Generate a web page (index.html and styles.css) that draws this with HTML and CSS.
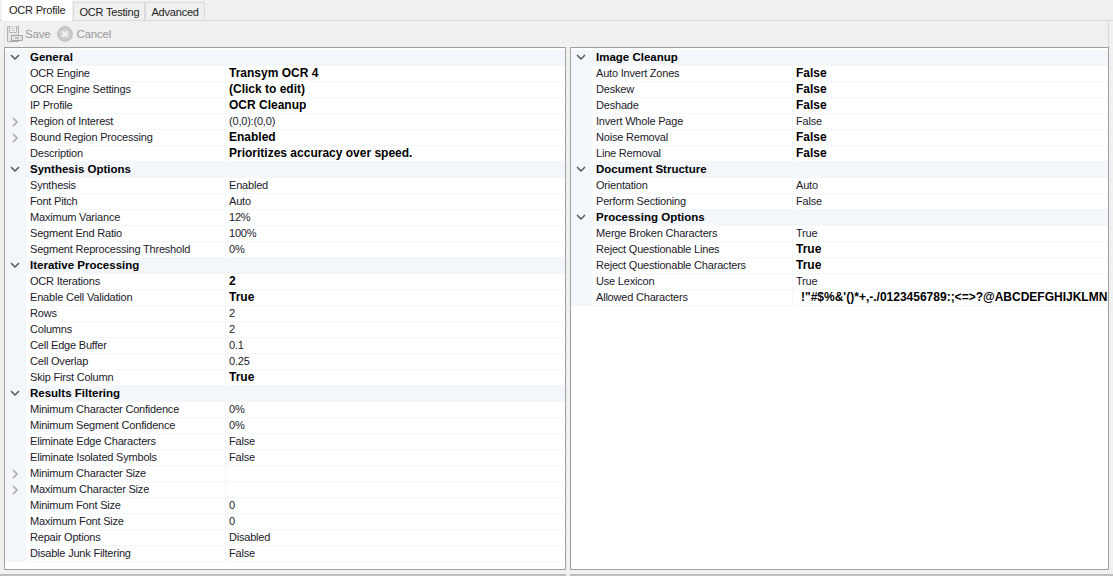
FILE: index.html
```html
<!DOCTYPE html>
<html lang="en">
<head>
<meta charset="utf-8">
<title>OCR Profile</title>
<link rel="stylesheet" href="styles.css">
</head>
<body>
<div class="tabs">
  <div class="tab active">OCR Profile</div>
  <div class="tab">OCR Testing</div>
  <div class="tab">Advanced</div>
</div>
<div class="toolbar">
  <svg class="icon" width="18" height="18" viewBox="0 0 18 18"><path d="M1.500 1.500h11v15h-11z" fill="#e6e6e6" stroke="#b0b0b0"/><path d="M3.500 1.500v6h7v-6" fill="#f4f4f4" stroke="#b8b8b8"/><path d="M5 3.500h4M5 5.500h4" stroke="#c8c8c8"/><path d="M5.500 10.500h11v5h-11z" fill="#e4e4e4" stroke="#a4a4a4"/><path d="M9 13h4" stroke="#a0a0a0"/></svg>
  <span class="tool-label">Save</span>
  <svg class="icon icon-cancel" width="16" height="16" viewBox="0 0 16 16"><circle cx="8" cy="8" r="7.500" fill="#c4c4c4" stroke="#c8c8c8"/><circle cx="8" cy="8" r="5.500" fill="#d2d2d2"/><path d="M5.500 5.500l5 5M10.500 5.500l-5 5" stroke="#f2f2f2" stroke-width="2"/></svg>
  <span class="tool-label tool-label-cancel">Cancel</span>
</div>
<div class="panels">
  <section class="grid grid-left">
    <div class="row group"><span class="gut"><svg class="chev" width="10" height="7" viewBox="0 0 10 7"><path d="M1 1l4 4 4-4" fill="none" stroke="#555" stroke-width="1.500"/></svg></span><span class="name">General</span></div>
    <div class="row"><span class="gut"></span><span class="name">OCR Engine</span><span class="val b">Transym OCR 4</span></div>
    <div class="row"><span class="gut"></span><span class="name">OCR Engine Settings</span><span class="val b">(Click to edit)</span></div>
    <div class="row"><span class="gut"></span><span class="name">IP Profile</span><span class="val b">OCR Cleanup</span></div>
    <div class="row"><span class="gut"><svg class="exp" width="7" height="10" viewBox="0 0 7 10"><path d="M1 1l4 4-4 4" fill="none" stroke="#a6a6a6" stroke-width="1.500"/></svg></span><span class="name">Region of Interest</span><span class="val">(0,0):(0,0)</span></div>
    <div class="row"><span class="gut"><svg class="exp" width="7" height="10" viewBox="0 0 7 10"><path d="M1 1l4 4-4 4" fill="none" stroke="#a6a6a6" stroke-width="1.500"/></svg></span><span class="name">Bound Region Processing</span><span class="val b">Enabled</span></div>
    <div class="row"><span class="gut"></span><span class="name">Description</span><span class="val b">Prioritizes accuracy over speed.</span></div>
    <div class="row group"><span class="gut"><svg class="chev" width="10" height="7" viewBox="0 0 10 7"><path d="M1 1l4 4 4-4" fill="none" stroke="#555" stroke-width="1.500"/></svg></span><span class="name">Synthesis Options</span></div>
    <div class="row"><span class="gut"></span><span class="name">Synthesis</span><span class="val">Enabled</span></div>
    <div class="row"><span class="gut"></span><span class="name">Font Pitch</span><span class="val">Auto</span></div>
    <div class="row"><span class="gut"></span><span class="name">Maximum Variance</span><span class="val">12%</span></div>
    <div class="row"><span class="gut"></span><span class="name">Segment End Ratio</span><span class="val">100%</span></div>
    <div class="row"><span class="gut"></span><span class="name">Segment Reprocessing Threshold</span><span class="val">0%</span></div>
    <div class="row group"><span class="gut"><svg class="chev" width="10" height="7" viewBox="0 0 10 7"><path d="M1 1l4 4 4-4" fill="none" stroke="#555" stroke-width="1.500"/></svg></span><span class="name">Iterative Processing</span></div>
    <div class="row"><span class="gut"></span><span class="name">OCR Iterations</span><span class="val b">2</span></div>
    <div class="row"><span class="gut"></span><span class="name">Enable Cell Validation</span><span class="val b">True</span></div>
    <div class="row"><span class="gut"></span><span class="name">Rows</span><span class="val">2</span></div>
    <div class="row"><span class="gut"></span><span class="name">Columns</span><span class="val">2</span></div>
    <div class="row"><span class="gut"></span><span class="name">Cell Edge Buffer</span><span class="val">0.1</span></div>
    <div class="row"><span class="gut"></span><span class="name">Cell Overlap</span><span class="val">0.25</span></div>
    <div class="row"><span class="gut"></span><span class="name">Skip First Column</span><span class="val b">True</span></div>
    <div class="row group"><span class="gut"><svg class="chev" width="10" height="7" viewBox="0 0 10 7"><path d="M1 1l4 4 4-4" fill="none" stroke="#555" stroke-width="1.500"/></svg></span><span class="name">Results Filtering</span></div>
    <div class="row"><span class="gut"></span><span class="name">Minimum Character Confidence</span><span class="val">0%</span></div>
    <div class="row"><span class="gut"></span><span class="name">Minimum Segment Confidence</span><span class="val">0%</span></div>
    <div class="row"><span class="gut"></span><span class="name">Eliminate Edge Characters</span><span class="val">False</span></div>
    <div class="row"><span class="gut"></span><span class="name">Eliminate Isolated Symbols</span><span class="val">False</span></div>
    <div class="row"><span class="gut"><svg class="exp" width="7" height="10" viewBox="0 0 7 10"><path d="M1 1l4 4-4 4" fill="none" stroke="#a6a6a6" stroke-width="1.500"/></svg></span><span class="name">Minimum Character Size</span><span class="val"></span></div>
    <div class="row"><span class="gut"><svg class="exp" width="7" height="10" viewBox="0 0 7 10"><path d="M1 1l4 4-4 4" fill="none" stroke="#a6a6a6" stroke-width="1.500"/></svg></span><span class="name">Maximum Character Size</span><span class="val"></span></div>
    <div class="row"><span class="gut"></span><span class="name">Minimum Font Size</span><span class="val">0</span></div>
    <div class="row"><span class="gut"></span><span class="name">Maximum Font Size</span><span class="val">0</span></div>
    <div class="row"><span class="gut"></span><span class="name">Repair Options</span><span class="val">Disabled</span></div>
    <div class="row"><span class="gut"></span><span class="name">Disable Junk Filtering</span><span class="val">False</span></div>
  </section>
  <section class="grid grid-right">
    <div class="row group"><span class="gut"><svg class="chev" width="10" height="7" viewBox="0 0 10 7"><path d="M1 1l4 4 4-4" fill="none" stroke="#555" stroke-width="1.500"/></svg></span><span class="name">Image Cleanup</span></div>
    <div class="row"><span class="gut"></span><span class="name">Auto Invert Zones</span><span class="val b">False</span></div>
    <div class="row"><span class="gut"></span><span class="name">Deskew</span><span class="val b">False</span></div>
    <div class="row"><span class="gut"></span><span class="name">Deshade</span><span class="val b">False</span></div>
    <div class="row"><span class="gut"></span><span class="name">Invert Whole Page</span><span class="val">False</span></div>
    <div class="row"><span class="gut"></span><span class="name">Noise Removal</span><span class="val b">False</span></div>
    <div class="row"><span class="gut"></span><span class="name">Line Removal</span><span class="val b">False</span></div>
    <div class="row group"><span class="gut"><svg class="chev" width="10" height="7" viewBox="0 0 10 7"><path d="M1 1l4 4 4-4" fill="none" stroke="#555" stroke-width="1.500"/></svg></span><span class="name">Document Structure</span></div>
    <div class="row"><span class="gut"></span><span class="name">Orientation</span><span class="val">Auto</span></div>
    <div class="row"><span class="gut"></span><span class="name">Perform Sectioning</span><span class="val">False</span></div>
    <div class="row group"><span class="gut"><svg class="chev" width="10" height="7" viewBox="0 0 10 7"><path d="M1 1l4 4 4-4" fill="none" stroke="#555" stroke-width="1.500"/></svg></span><span class="name">Processing Options</span></div>
    <div class="row"><span class="gut"></span><span class="name">Merge Broken Characters</span><span class="val">True</span></div>
    <div class="row"><span class="gut"></span><span class="name">Reject Questionable Lines</span><span class="val b">True</span></div>
    <div class="row"><span class="gut"></span><span class="name">Reject Questionable Characters</span><span class="val b">True</span></div>
    <div class="row"><span class="gut"></span><span class="name">Use Lexicon</span><span class="val">True</span></div>
    <div class="row"><span class="gut"></span><span class="name">Allowed Characters</span><span class="val b allowed">!"#$%&amp;'()*+,-./0123456789:;&lt;=&gt;?@ABCDEFGHIJKLMN</span></div>
  </section>
</div>
<div class="footer-line"><div class="fl-left"></div><div class="fl-right"></div></div>
```

FILE: styles.css
```css
* { box-sizing: border-box; }
html, body { margin: 0; height: 100%; }
body {
  width: 1113px;
  height: 576px;
  overflow: hidden;
  background: #f0f0f0;
  font-family: "Liberation Sans", Arial, sans-serif;
  font-size: 11px;
  color: #1a1a2a;
  display: flex;
  flex-direction: column;
}
.tabs {
  display: flex;
  align-items: flex-end;
  height: 21px;
  padding-left: 2px;
  border-bottom: 1px solid #d9d9d9;
}
.tab {
  height: 18px;
  padding: 0 5px;
  background: #f0f0f0;
  border: 1px solid #d9d9d9;
  border-bottom: 0;
  line-height: 18px;
  color: #222;
  font-size: 11px;
  letter-spacing: -0.2px;
}
.tab.active {
  height: 21px;
  padding: 0 6px;
  margin-right: 1px;
  background: #fff;
  border-color: #fff;
  line-height: 19px;
  margin-bottom: -1px;
  position: relative;
}
.toolbar {
  height: 26px;
  margin: 0 4px 0 4px;
  display: flex;
  align-items: center;
  padding-left: 1px;
  border-left: 1px solid #e4e4e4;
  border-right: 1px solid #d9d9d9;
  color: #999;
  font-size: 11.500px;
  letter-spacing: -0.2px;
}
.icon { flex: none; }
.tool-label { margin-left: 1px; }
.icon-cancel { margin-left: 7px; }
.tool-label-cancel { margin-left: 3px; }
.panels {
  display: flex;
  gap: 4px;
  padding-left: 4px;
  height: 524px;
}
.grid {
  background: #fff;
  border: 1px solid #a0a0a0;
  padding-top: 2px;
  overflow: hidden;
}
.grid-left { width: 562px; }
.grid-right { width: 539px; }
.row {
  display: flex;
  height: 16px;
  line-height: 15px;
  border-bottom: 1px solid #f3f6fb;
  white-space: nowrap;
}
.gut {
  flex: none;
  width: 21px;
  height: 16px;
  background: #f3f6fb;
  display: flex;
  align-items: center;
  padding-left: 5px;
}
.exp { margin-left: 2px; }
.name { flex: none; width: 200px; padding-left: 4px; border-right: 1px solid #f3f6fb; letter-spacing: -0.2px; }
.val { flex: 1; padding-left: 3px; overflow: hidden; letter-spacing: -0.2px; }
.b { font-weight: 700; color: #000; font-size: 12px; letter-spacing: 0; }
.group { background: #f3f6fb; border-bottom: 0; }
.group .name { font-weight: 700; color: #000; border-right: 0; font-size: 11.500px; letter-spacing: 0; }
.grid-right .name { width: 201px; }
.allowed { padding-left: 8px; }
.footer-line { display: flex; gap: 4px; margin-top: 4px; }
.fl-left { width: 566px; height: 2px; background: #bdbdbd; }
.fl-right { flex: 1; height: 2px; background: #bdbdbd; }
```
